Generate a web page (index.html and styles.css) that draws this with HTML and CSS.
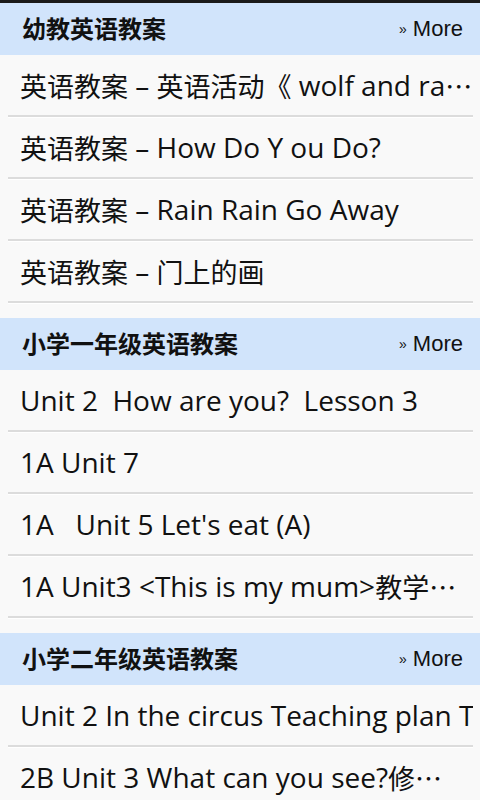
FILE: index.html
```html
<!DOCTYPE html>
<html lang="zh-CN">
<head>
<meta charset="utf-8">
<link rel="stylesheet" href="styles.css">
</head>
<body>
<div class="topbar"></div>
<section class="section">
  <div class="head"><span class="title">幼教英语教案</span><span class="more"><span class="raquo">»</span> More</span></div>
  <div class="item"><span class="zh">英语教案</span> – <span class="zh">英语活动《</span> wolf and ra<span class="zh">⋯</span></div>
  <div class="item"><span class="zh">英语教案</span> – How Do Y ou Do?</div>
  <div class="item"><span class="zh">英语教案</span> – Rain Rain Go Away</div>
  <div class="item"><span class="zh">英语教案</span> – <span class="zh">门上的画</span></div>
</section>
<section class="section">
  <div class="head"><span class="title">小学一年级英语教案</span><span class="more"><span class="raquo">»</span> More</span></div>
  <div class="item">Unit 2&nbsp; How are you?&nbsp; Lesson 3</div>
  <div class="item">1A Unit 7</div>
  <div class="item">1A&nbsp;&nbsp; Unit 5 Let's eat (A)</div>
  <div class="item">1A Unit3 &lt;This is my mum&gt;<span class="zh">教学⋯</span></div>
</section>
<section class="section">
  <div class="head"><span class="title">小学二年级英语教案</span><span class="more"><span class="raquo">»</span> More</span></div>
  <div class="item">Unit 2 In the circus Teaching plan T</div>
  <div class="item">2B Unit 3 What can you see?<span class="zh">修⋯</span></div>
</section>
</body>
</html>
```
FILE: styles.css
```css
html, body {
  margin: 0;
  padding: 0;
  background: #f9f9f9;
}
body {
  width: 480px;
  height: 800px;
  overflow: hidden;
  font-family: "Open Sans", "Noto Sans CJK SC", sans-serif;
  color: #111;
}
.topbar {
  height: 3px;
  background: #1a1a1a;
}
.section {
  margin-bottom: 15px;
}
.head {
  height: 52px;
  background: #d1e4fb;
  display: flex;
  align-items: center;
  justify-content: space-between;
  padding: 0 17px 0 22px;
}
.title {
  font-family: "Noto Sans CJK SC", sans-serif;
  font-size: 24px;
  font-weight: bold;
  color: #111;
  margin-top: -3px;
}
.more {
  font-family: "Liberation Sans", sans-serif;
  font-size: 22px;
  color: #111;
}
.raquo {
  font-size: 14px;
  vertical-align: 2px;
}
.item {
  height: 60px;
  margin: 0 7px 0 8px;
  padding-left: 12px;
  border-bottom: 2px solid #dcdcdc;
  box-shadow: 0 1px 0 #ffffff;
  display: flex;
  align-items: center;
  font-size: 28px;
  white-space: pre;
  overflow: hidden;
}
.zh {
  font-family: "Noto Sans CJK SC", sans-serif;
  font-size: 27px;
}
```
